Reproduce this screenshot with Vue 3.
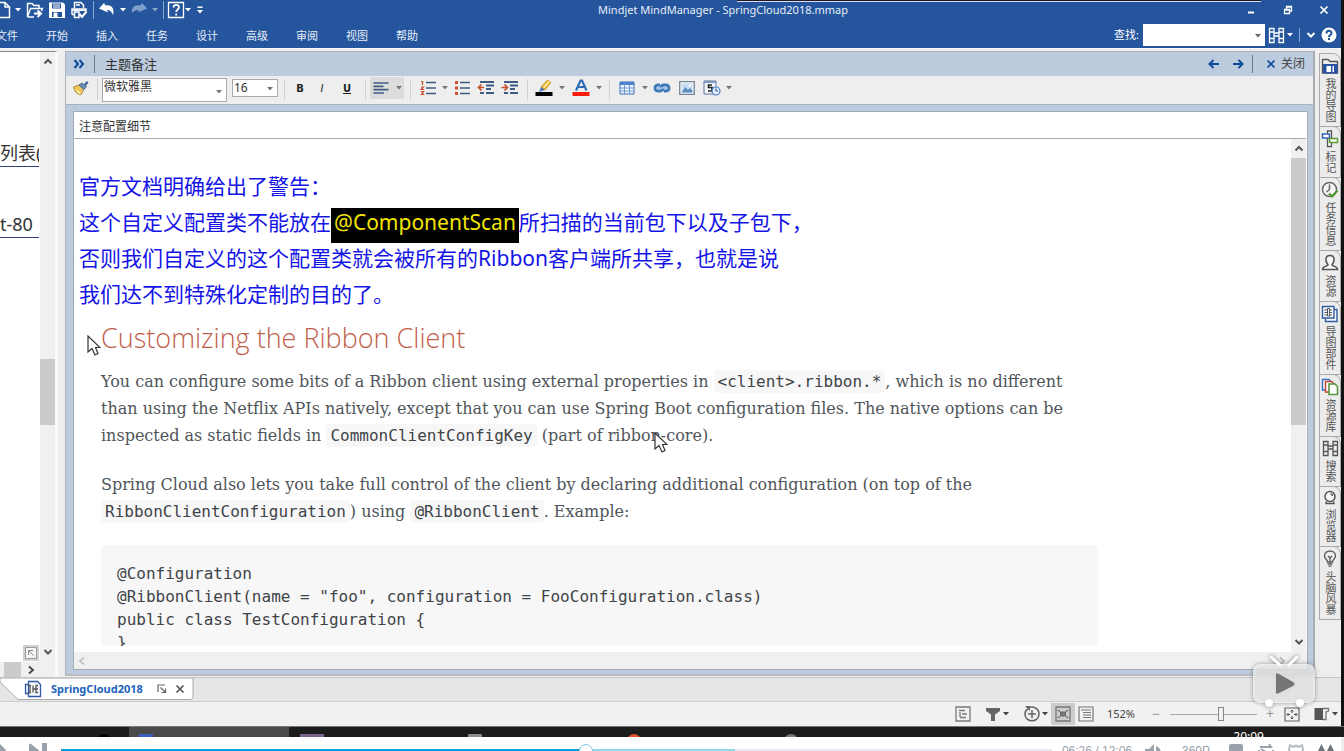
<script setup>
import { h, ref } from 'vue'

const glyphs = {
  newdoc: [12, 18, '<path d="M-4 1.500H5L9.500 6V16.500H-4M5 1.500V6H9.500" fill="none" stroke="#fff" stroke-width="1.500"/>'],
  open: [18, 18, '<path d="M1.500 16V2.500H6L8 4.500H13V7M1.500 16L4.500 7.500H16.500L15.500 10M1.500 16H8" fill="none" stroke="#fff" stroke-width="1.400"/><path d="M8 12.500H14M11.500 9.500L15 12.500L11.500 16" fill="none" stroke="#fff" stroke-width="2"/>'],
  save: [18, 18, '<path d="M1 1.500H15L17 3.500V17H1Z" fill="#fff"/><path d="M4 2.500H13V7.500H4ZM4 11H14V16H4Z" fill="#25569d"/><path d="M5 4H12M5 6H12M6 12H9V16H6Z" stroke="#fff" stroke-width="1" fill="#fff"/>'],
  print: [18, 18, '<path d="M4.500 7V1.500H11L13.500 4V7M2 13.500V8H16V11M4.500 11H9V16.500H4.500ZM2 13.500H4M6 4H10" fill="none" stroke="#fff" stroke-width="1.500"/><path d="M3 8.500H15V10H3Z" fill="#fff"/><path d="M9.500 13L12 16L16.500 10.500" fill="none" stroke="#fff" stroke-width="2"/>'],
  undo: [18, 18, '<path d="M1 7.500L6 2L7.500 4.500C13 3 17 7 15 14C13.500 10 11 8.500 9 9L10 11.500Z" fill="#fff"/>'],
  redo: [18, 18, '<path d="M17 7.500L12 2L10.500 4.500C5 3 1 7 2 12C4 9.500 7 8.500 9 9L8 11.500Z" fill="#7f9fcc"/>'],
  ask: [18, 18, '<path d="M1.500 1.500H16.500V16.500H1.500Z" fill="none" stroke="#fff" stroke-width="1.300"/><path d="M6.500 6.500C6.500 3 12 3 12 6.300C12 8.500 9.200 8.500 9.200 11M9.200 12.500V14.500" fill="none" stroke="#fff" stroke-width="1.800"/>'],
  caret: [6, 4, '<path d="M0 0H6L3 3.500Z" fill="currentColor"/>'],
  more: [6, 8, '<path d="M0.500 0.500H5.500V2H0.500ZM0 4H6L3 7.500Z" fill="currentColor"/>'],
  min: [10, 10, '<path d="M2 7.500H8" stroke="#fff" stroke-width="2"/>'],
  restore: [10, 10, '<path d="M1.500 4.500H6.500V8.500H1.500ZM3.500 4V1.500H8.500V6H7M3.500 2H8.500M1.500 5H6.500" fill="none" stroke="#fff" stroke-width="1.300"/>'],
  close: [10, 10, '<path d="M1.500 1.500L8.500 8.500M8.500 1.500L1.500 8.500" stroke="currentColor" stroke-width="1.700"/>'],
  binoc: [17, 17, '<path d="M1.500 15.500V1.500H6V15.500H1.500ZM15.500 15.500V1.500H11V15.500H15.500ZM6 6H11M6 9H11M1.500 5H6M11 5H15.500M1.500 11.500H6M11 11.500H15.500" fill="none" stroke="currentColor" stroke-width="1.300"/>'],
  down: [10, 10, '<path d="M1.500 3L5 6.500L8.500 3" fill="none" stroke="currentColor" stroke-width="2"/>'],
  up: [10, 10, '<path d="M1.500 6.500L5 3L8.500 6.500" fill="none" stroke="currentColor" stroke-width="2"/>'],
  left: [10, 10, '<path d="M7 1.500L3 5L7 8.500" fill="none" stroke="currentColor" stroke-width="1.600"/>'],
  right: [10, 10, '<path d="M3 1.500L7 5L3 8.500" fill="none" stroke="currentColor" stroke-width="1.800"/>'],
  help: [16, 16, '<circle cx="8" cy="8" r="7.500" fill="#fff"/><path d="M5.500 6.500C5.500 3 10.500 3 10.500 6.200C10.500 8 8 8 8 10M8 11V13" fill="none" stroke="#25569d" stroke-width="2"/>'],
  chevrons: [12, 10, '<path d="M1.500 1L5 5L1.500 9M6.500 1L10 5L6.500 9" fill="none" stroke="#0b4a9c" stroke-width="2"/>'],
  back: [12, 10, '<path d="M11 5H2M5.500 1L1.500 5L5.500 9" fill="none" stroke="#0b4a9c" stroke-width="2"/>'],
  forward: [12, 10, '<path d="M1 5H10M6.500 1L10.500 5L6.500 9" fill="none" stroke="#0b4a9c" stroke-width="2"/>'],
  brush: [18, 16, '<path d="M1.500 7L7 5L12 9.500L8.500 15C5 14 2 11 1.500 7Z" fill="#eec65c" stroke="#b08b3c"/><path d="M3 9L9 12.500L7.500 14.500Z" fill="#fff0a8"/><path d="M7 5L10 3L14.500 6.500L12 9.500Z" fill="#6d8fb8" stroke="#4a6a92"/><path d="M12 4L15 1L16.500 2.200L14 6Z" fill="#3f679b"/>'],
  align: [16, 14, '<path d="M0.500 2H15.500M0.500 5.300H10.500M0.500 8.600H15.500M0.500 12H11" stroke="#3c5c84" stroke-width="1.700"/>'],
  ol: [16, 16, '<path d="M6 2.500H16M6 8H16M6 13.500H16" stroke="#3c5c84" stroke-width="1.700"/><path d="M1 1.500H2.500V5M1 7H3.500L1 9.500H4M1 11.500H3.500L2 13L3.500 14.500H0.500" fill="none" stroke="#c9502c" stroke-width="1.200"/>'],
  ul: [16, 16, '<path d="M6 2.500H16M6 8H16M6 13.500H16" stroke="#3c5c84" stroke-width="1.700"/><path d="M1 1H4V4H1ZM1 6.500H4V9.500H1ZM1 12H4V15H1Z" fill="#c9502c"/>'],
  outdent: [18, 16, '<path d="M3 2H17M9 5.500H17M9 9H14M3 13H7M9 13H17" stroke="#3c5c84" stroke-width="2"/><path d="M7 7.500H2M4.500 4.500L1.500 7.500L4.500 10.500" fill="none" stroke="#c9502c" stroke-width="1.700"/>'],
  indent: [18, 16, '<path d="M3 2H17M9 5.500H17M9 9H14M3 13H7M9 13H17" stroke="#3c5c84" stroke-width="2"/><path d="M0.500 7.500H5.500M3.500 4.500L6.500 7.500L3.500 10.500" fill="none" stroke="#c9502c" stroke-width="1.700"/>'],
  marker: [18, 18, '<path d="M0.500 13H17.500V17H0.500Z" fill="#000"/><path d="M6 8L12.500 1L16 3.500L10 11Z" fill="#f3b936" stroke="#c98a1c" stroke-width=".8"/><path d="M8 8L13.500 2L15 3L9.500 9Z" fill="#ffe9a0"/><path d="M6 8L10 11L4 13Z" fill="#4f7dba"/>'],
  color: [18, 18, '<path d="M0.500 13H17.500V17H0.500Z" fill="#f51a0c"/><path d="M4 11.500L8.500 1.500H10L14.500 11.500M6 8H12" fill="none" stroke="#2f6eb5" stroke-width="2.200"/>'],
  grid: [16, 14, '<path d="M1 1H15V13H1Z" fill="#eef5ff" stroke="#3b6fb5"/><path d="M1 1H15V4H1Z" fill="#4c83cc"/><path d="M1 7H15M1 10H15M5.500 3V13M10.500 3V13" stroke="#6e9ad4"/>'],
  link: [18, 12, '<path d="M7 3H5C1 3 1 9 5 9H7C9 9 10 8 10 6M11 9H13C17 9 17 3 13 3H11C9 3 8 4 8 6" fill="none" stroke="#3d78bb" stroke-width="2.800"/><path d="M4 6H14" stroke="#91bce9" stroke-width="1.500"/>'],
  picture: [16, 14, '<path d="M0.700 0.700H15.300V13.300H0.700Z" fill="#f4f8fd" stroke="#7a8797" stroke-width="1.300"/><path d="M2.500 2.500H13.500V11.500H2.500Z" fill="#c7dcf2"/><path d="M2.500 11.500L6.500 6L9 9L11 7L13.500 10V11.500Z" fill="#5c8bc2"/><circle cx="11" cy="4.500" r="1.200" fill="#fff"/>'],
  date: [18, 16, '<path d="M1 1H13V14H1Z" fill="#f4f7fb" stroke="#5a779e"/><path d="M1 1H13V3H1Z" fill="#7998c2"/><path d="M9 5H5.500V7.500H9V11H5" fill="none" stroke="#222" stroke-width="1.700"/><circle cx="13" cy="11" r="4" fill="#e4f0ff" stroke="#4a7fc2" stroke-width="1.200"/><path d="M13 8.500V11H15" stroke="#23538d" fill="none"/>'],
  folder: [18, 18, '<path d="M1.500 16V2.500H7L9 4.500H16.500V16Z" fill="#eee" stroke="#555" stroke-width="1.400"/><path d="M2 7H16.500V16.500H2Z" fill="#2c52a5"/><path d="M5.500 9H10V15H5.500ZM11.500 9H13V15H11.500Z" fill="#fff"/>'],
  tags: [18, 18, '<path d="M6.500 1H10.500V16.500H6.500Z" fill="#fff" stroke="#555" stroke-width="1.300"/><path d="M1.500 4H8.500V8H1.500Z" fill="#fff" stroke="#2f62b5" stroke-width="1.500"/><path d="M8.500 8.500H16.500V12.500H8.500Z" fill="#fff" stroke="#5a9b35" stroke-width="1.500"/>'],
  clock: [18, 18, '<circle cx="8.500" cy="8.500" r="7" fill="#f6f6f6" stroke="#666" stroke-width="1.500"/><path d="M8.500 3.500V8.500L5.500 11" fill="none" stroke="#666" stroke-width="1.500"/><path d="M8 12.500L11 15.500L16.500 9.500" fill="none" stroke="#4c982b" stroke-width="2.200"/>'],
  person: [18, 18, '<path d="M1.500 15.500H16.500C16.500 12 12 12.500 11 11C14.500 6 13.500 1.500 9 1.500S3.500 6 7 11C6 12.500 1.500 12 1.500 15.500Z" fill="#f7f7f7" stroke="#555" stroke-width="1.500"/>'],
  parts: [18, 18, '<path d="M1.500 1.500H13V13H1.500ZM13 4.500H16V16.500H4.500V13" fill="#f4f8ff" stroke="#315b9d" stroke-width="1.400"/><path d="M3.500 5H6M3.500 7.500H6M3.500 10H6M9 5H11M9 7.500H11M9 10H11M6.500 3.500H8.500V11H6.500Z" fill="none" stroke="#555"/>'],
  library: [18, 18, '<path d="M1.500 1.500H8L10 4V12H1.500Z" fill="#fff" stroke="#3b6fc4" stroke-width="1.500"/><path d="M4.500 3.500H10.500L13 6V14H4.500Z" fill="#fff" stroke="#c74332" stroke-width="1.500"/><path d="M8 6H14L16.500 8.500V16.500H8Z" fill="#fff" stroke="#559440" stroke-width="1.600"/>'],
  globe: [16, 16, '<circle cx="8" cy="6.500" r="5" fill="#f7f7f7" stroke="#555" stroke-width="1.500"/><path d="M4.500 11.500L4 13.500H12L11.500 11.500M8.500 4C10 4 10.500 5 10.500 6" fill="none" stroke="#555" stroke-width="1.400"/>'],
  bulb: [16, 18, '<path d="M5.500 12C5.500 9.500 2.500 9 2.500 6C2.500 -0.500 13.500 -0.500 13.500 6C13.500 9 10.500 9.500 10.500 12ZM5.500 14H10.500M6.500 16.200H9.500M6 6L8 8L10 6M8 8V12" fill="none" stroke="#555" stroke-width="1.300"/>'],
  mapfile: [18, 18, '<path d="M4.500 4V1.500H13.500L16.500 4.500V16.500H4.500V14M1.500 4.500H4.500V13.500H1.500Z" fill="#f5f8ff" stroke="#3458a4" stroke-width="1.300"/><path d="M4 5.500H7M4 12.500H7M6 5.500V12.500M9 5.500V12.500M9 9H14M14 5.500H12V12.500H14" fill="none" stroke="#555" stroke-width="1.300"/>'],
  popout: [10, 10, '<path d="M1 8V1H8M3.500 3.500L8 8M8.500 4.500V8.500H4.500" fill="none" stroke="#666" stroke-width="1.200"/>'],
  outline: [16, 16, '<path d="M1 1H15V15H1ZM4 4.500H10M7 8H12M5 11.500H11M5 6V11" fill="none" stroke="#777" stroke-width="1.300"/>'],
  filter: [16, 16, '<path d="M1 2H15V5L10 8.500V15H6V8.500L1 5Z" fill="#666"/>'],
  addcircle: [18, 18, '<path d="M5 3C9 0.500 16 3 16 9C16 18 2 18 2 9C2 7 3 5 5 4M9 5V13M5 9H13" fill="none" stroke="#666" stroke-width="1.600"/><path d="M2 1H7V6Z" fill="#666"/>'],
  mapview: [16, 16, '<path d="M1 1H15V15H1Z" fill="none" stroke="#777" stroke-width="1.300"/><path d="M5.500 6H10.500V10H5.500ZM3 4L6 7M13 4L10 7M3 12L6 9M13 12L10 9M2.500 4.500H4.500M11.500 4.500H13.500M2.500 11.500H4.500M11.500 11.500H13.500" fill="#777" stroke="#666"/>'],
  listview: [16, 16, '<path d="M1 1H15V15H1ZM3 4H13M5 6.500H13M5 9H13M5 11.500H13" fill="none" stroke="#777" stroke-width="1.200"/>'],
  fit: [16, 16, '<path d="M1 2H15V15H1Z" fill="none" stroke="#666" stroke-width="1.200"/><path d="M8 4V7M8 10V13M3 8.500H6M10 8.500H13M6.500 5.500L8 4L9.500 5.500M6.500 11.500L8 13L9.500 11.500M4.500 7L3 8.500L4.500 10M11.500 7L13 8.500L11.500 10" fill="none" stroke="#555"/>'],
  panel: [16, 14, '<path d="M0.500 1H9V13H0.500Z" fill="#555"/><path d="M9 1.500H14.500V4L12 5V12.500H9" fill="none" stroke="#777" stroke-width="1.300"/>'],
  corner: [16, 16, '<path d="M0 0H16V16H0Z" fill="#d0d0d0"/><path d="M2.500 2.500H13.500V13.500H2.500Z" fill="#f5f5f5" stroke="#999"/><path d="M5.500 10V5.500H10M6 6L10.500 10.500" fill="none" stroke="#888"/>'],
  pointer: [14, 22, '<path d="M1 1V17L5 13.500L8 20L11 18.500L8.500 12.500H13Z" fill="#fff" stroke="#333" stroke-width="1.200"/>'],
  tv: [68, 56, '<path d="M21 3L30 11M47 3L39 11" stroke="#fff" stroke-width="3" stroke-linecap="round"/><circle cx="19" cy="49" r="4" fill="#fff"/><circle cx="50" cy="49" r="4" fill="#fff"/><rect x="3" y="10" width="62" height="39" rx="7" fill="#fff" fill-opacity=".72"/><path d="M26 21C26 19 27 19 29 20L43 28C45 29 45 31 43 32L29 39C27 40 26 40 26 38Z" fill="#757575"/>'],
  play: [6, 16, '<path d="M0 1L6 7L0 13Z" fill="#99a2aa"/>'],
  next: [18, 16, '<path d="M0 1Q0 0 2 1L12 9L0 17ZM13 0H18V16H13Z" fill="#99a2aa"/>'],
  sound: [18, 16, '<path d="M1 6H5L10 1V16H1ZM12 3C18 5 18 11 12 13" fill="#99a2aa"/>'],
  danmu: [16, 16, '<rect x="1" y="1" width="14" height="14" rx="2" fill="#99a2aa"/>'],
  repeat: [18, 16, '<path d="M3 4H14L12 1M16 7V13M2 7V12M4 6L15 13" fill="none" stroke="#99a2aa" stroke-width="2"/>'],
  gear: [18, 16, '<path d="M3 2L6 4L9 2.500L12 4L15 2L16 6L15 10H3L2 6Z" fill="none" stroke="#b4bcc4" stroke-width="2"/>'],
  full: [18, 16, '<path d="M1 15V8L4.500 1L8 8V15ZM10 15V8L13.500 1L17 8V15Z" fill="#6d757a"/>']
}

const Icon = ({ name }) => {
  const [w, ht, body] = glyphs[name]
  return h('svg', { width: w, height: ht, viewBox: `0 0 ${w} ${ht}`, 'aria-hidden': 'true', innerHTML: body })
}
Icon.props = ['name']

const menus = ['文件', '开始', '插入', '任务', '设计', '高级', '审阅', '视图', '帮助']
const quick = [
  ['newdoc', 'w12'], ['caret', 'w12'], ['open', 'w22'], ['save', 'w22'], ['print', 'w22'], ['|', 'w6'],
  ['undo', 'w22'], ['caret', 'w10'], ['redo', 'w22'], ['caret', 'w10', 'faded'], ['|', 'w6'], ['ask', 'w20'], ['caret', 'w4'], ['more', 'w20']
]
const format = [
  ['ol', 'w24'], ['caret', 'w10'], ['ul', 'w24'], ['outdent', 'w24'], ['indent', 'w24'], ['|', 'w10'],
  ['marker', 'w24'], ['caret', 'w12'], ['color', 'w26'], ['caret', 'w10'], ['|', 'w10'],
  ['grid', 'w26'], ['caret', 'w10'], ['link', 'w24'], ['picture', 'w26'], ['date', 'w24'], ['caret', 'w10']
]
const side = [
  ['folder', '我的导图'], ['tags', '标记'], ['clock', '任务信息'], ['person', '资源'], ['parts', '导图部件'],
  ['library', '资源库'], ['binoc', '搜索'], ['globe', '浏览器'], ['bulb', '头脑风暴']
]
const zoom = ref(59)
const query = ref('')
const code = `@Configuration
@RibbonClient(name = "foo", configuration = FooConfiguration.class)
public class TestConfiguration {
}`
</script>

<template>
  <div class="page">
    <div class="video">
      <div class="app">
        <header class="top">
          <div class="titlebar">
            <div class="quick">
              <template v-for="(q, i) in quick" :key="i">
                <span v-if="q[0] === '|'" class="bar" :class="q[1]"></span>
                <button v-else :class="[q[1], q[2]]" :aria-label="q[0]"><Icon :name="q[0]" /></button>
              </template>
            </div>
            <div class="title">Mindjet MindManager - SpringCloud2018.mmap</div>
            <div class="window">
              <button aria-label="minimize"><Icon name="min" /></button>
              <button aria-label="restore"><Icon name="restore" /></button>
              <button aria-label="close"><Icon name="close" /></button>
            </div>
          </div>
          <div class="ribbon">
            <nav>
              <button v-for="m in menus" :key="m">{{ m }}</button>
            </nav>
            <label for="find">查找:</label>
            <div class="find">
              <input id="find" v-model="query" type="text" />
              <Icon name="caret" />
            </div>
            <button class="w22" aria-label="find"><Icon name="binoc" /></button>
            <button class="w6" aria-label="find options"><Icon name="caret" /></button>
            <span class="bar w12"></span>
            <button class="w12" aria-label="collapse"><Icon name="down" /></button>
            <button class="w24" aria-label="help"><Icon name="help" /></button>
          </div>
        </header>
        <div class="notch"></div>

        <main class="main">
          <section class="map">
            <div class="canvas">
              <div class="topic first">列表(</div>
              <div class="topic second">t-80</div>
              <button class="corner" aria-label="overview"><Icon name="corner" /></button>
            </div>
            <div class="vscroll">
              <Icon name="up" />
              <span class="thumb"></span>
              <Icon name="down" />
            </div>
            <div class="hscroll"><span></span><Icon name="right" /></div>
          </section>

          <section class="notes">
            <div class="noteshead">
              <button class="w26" aria-label="collapse notes"><Icon name="chevrons" /></button>
              <span class="rule"></span>
              <h1>主题备注</h1>
              <button class="w24" aria-label="previous"><Icon name="back" /></button>
              <button class="w24" aria-label="next"><Icon name="forward" /></button>
              <span class="rule"></span>
              <button class="closer"><Icon name="close" /><span>关闭</span></button>
            </div>
            <div class="tools">
              <button class="w22" aria-label="format painter"><Icon name="brush" /></button>
              <span class="bar w10"></span>
              <div class="pick font">
                <select aria-label="font"><option>微软雅黑</option></select>
                <Icon name="caret" />
              </div>
              <div class="pick size">
                <select aria-label="size"><option>16</option></select>
                <Icon name="caret" />
              </div>
              <span class="bar w12"></span>
              <button class="w20 letter"><b>B</b></button>
              <button class="w24 letter"><i>I</i></button>
              <button class="w26 letter"><u>U</u></button>
              <span class="bar w10"></span>
              <button class="aligned" aria-label="align"><Icon name="align" /><Icon name="caret" /></button>
              <span class="bar w12"></span>
              <template v-for="(f, i) in format" :key="i">
                <span v-if="f[0] === '|'" class="bar" :class="f[1]"></span>
                <button v-else :class="f[1]" :aria-label="f[0]"><Icon :name="f[0]" /></button>
              </template>
            </div>
            <div class="frame">
              <div class="subject">注意配置细节</div>
              <div class="view">
                <article class="doc">
                  <div class="warn">
                    <p>官方文档明确给出了警告：</p>
                    <p>这个自定义配置类不能放在<mark>@ComponentScan</mark>所扫描的当前包下以及子包下，</p>
                    <p>否则我们自定义的这个配置类就会被所有的Ribbon客户端所共享，也就是说</p>
                    <p>我们达不到特殊化定制的目的了。</p>
                  </div>
                  <div class="guide">
                    <h2>Customizing the Ribbon Client</h2>
                    <p>You can configure some bits of a Ribbon client using external properties in <code>&lt;client&gt;.ribbon.*</code>, which is no different<br />than using the Netflix APIs natively, except that you can use Spring Boot configuration files. The native options can be<br />inspected as static fields in <code>CommonClientConfigKey</code> (part of ribbon-core).</p>
                    <p>Spring Cloud also lets you take full control of the client by declaring additional configuration (on top of the<br /><code>RibbonClientConfiguration</code>) using <code>@RibbonClient</code>. Example:</p>
                    <pre>{{ code }}</pre>
                  </div>
                  <Icon name="pointer" class="cursor one" />
                  <Icon name="pointer" class="cursor two" />
                </article>
                <div class="vscroll wide">
                  <Icon name="up" />
                  <span class="thumb"></span>
                  <Icon name="down" />
                </div>
              </div>
              <div class="hbar"><Icon name="left" /><Icon name="right" /></div>
            </div>
          </section>

          <aside class="side">
            <button v-for="s in side" :key="s[1]"><Icon :name="s[0]" /><span>{{ s[1] }}</span></button>
          </aside>
        </main>

        <div class="files">
          <div class="file">
            <svg class="shape" viewBox="0 0 194 23" width="194" height="23" aria-hidden="true"><path d="M0 0H193V19Q193 21.500 190 21.500H18L0 4Z" fill="#fff" stroke="#aaa" /></svg>
            <Icon name="mapfile" />
            <a href="#">SpringCloud2018</a>
            <button class="w20" aria-label="detach"><Icon name="popout" /></button>
            <button class="w16" aria-label="close file"><Icon name="close" /></button>
          </div>
        </div>

        <footer class="status">
          <button class="w24 outline" aria-label="outline"><Icon name="outline" /></button>
          <button class="w20" aria-label="filter"><Icon name="filter" /></button>
          <button class="w6" aria-label="filter options"><Icon name="caret" /></button>
          <button class="w20 plus" aria-label="detail"><Icon name="addcircle" /></button>
          <button class="w6" aria-label="detail options"><Icon name="caret" /></button>
          <button class="active w24" aria-label="map view"><Icon name="mapview" /></button>
          <button class="w22" aria-label="outline view"><Icon name="listview" /></button>
          <label class="percent" for="zoom">152%</label>
          <button class="w26 sign" aria-label="zoom out">−</button>
          <input id="zoom" v-model="zoom" type="range" min="0" max="100" />
          <button class="w24 sign" aria-label="zoom in">+</button>
          <button class="w20" aria-label="fit map"><Icon name="fit" /></button>
          <button class="w30 pane" aria-label="task panes"><Icon name="panel" /></button>
          <button class="w6" aria-label="pane options"><Icon name="caret" /></button>
        </footer>
      </div>
      <div class="taskbar">
        <span class="tile"></span>
        <i class="dot d1"></i><i class="dot d2"></i><i class="dot d3"></i><i class="dot d4"></i><i class="dot d5"></i><i class="dot d6"></i>
        <time>20:09</time>
      </div>
      <Icon name="tv" class="tv" />
    </div>

    <div class="player">
      <button class="go" aria-label="play"><Icon name="play" /></button>
      <button class="skip" aria-label="next video"><Icon name="next" /></button>
      <div class="track"><span class="loaded"></span><span class="played"></span><span class="knob"></span></div>
      <span class="time">06:26 / 12:06</span>
      <button class="w36" aria-label="volume"><Icon name="sound" /></button>
      <button class="quality">360P</button>
      <button class="w30" aria-label="comments"><Icon name="danmu" /></button>
      <button class="w30" aria-label="repeat"><Icon name="repeat" /></button>
      <button class="w30" aria-label="settings"><Icon name="gear" /></button>
      <button class="w30" aria-label="full screen"><Icon name="full" /></button>
    </div>
  </div>
</template>

<style>
body { overflow: hidden; }
</style>

<style scoped>
* { box-sizing: border-box; }
.page { height: 100vh; display: flex; flex-direction: column; overflow: hidden; background: #fff; color: #333; font: 12px/16px "Noto Sans", "Noto Sans CJK SC", sans-serif; }
button { border: 0; padding: 0; margin: 0; background: none; color: inherit; font: inherit; display: flex; align-items: center; justify-content: center; flex: none; }
svg { display: block; flex: none; }
p, h1, h2, pre { margin: 0; font-weight: 400; }
.w4 { width: 4px; } .w6 { width: 6px; } .w10 { width: 10px; } .w12 { width: 12px; } .w16 { width: 16px; }
.w20 { width: 20px; } .w22 { width: 22px; } .w24 { width: 24px; } .w26 { width: 26px; } .w30 { width: 30px; } .w36 { width: 36px; }
.bar { flex: none; align-self: stretch; display: flex; justify-content: center; }
.bar::before { content: ""; width: 1px; background: currentColor; }

.video { flex: 1; min-height: 0; display: flex; flex-direction: column; position: relative; background: #111; }
.app { flex: 1; min-height: 0; margin-right: 3px; display: flex; flex-direction: column; background: #eee; }

.top { background: #25569d; color: #fff; height: 48px; flex: none; margin-right: -3px; border-right: 3px solid #111; }
.titlebar { height: 20px; display: flex; align-items: center; }
.quick { width: 208px; height: 18px; display: flex; align-items: center; }
.quick .bar { color: #89a6d0; }
.faded { color: #89a6d0; }
.title { flex: 1; text-align: center; color: #e6edf8; font-size: 11px; padding-left: 4px; }
.window { width: 107px; display: flex; justify-content: space-between; padding: 0 12px; }
.ribbon { height: 28px; display: flex; align-items: center; padding-top: 2px; }
.ribbon nav { display: flex; flex: 1; margin-left: -18px; }
.ribbon nav button { width: 50px; font-size: 11px; height: 24px; padding-top: 2px; color: #e6edf8; }
.ribbon label { font-size: 11px; margin-right: 4px; }
.find { width: 122px; height: 22px; position: relative; color: #666; }
.find input { width: 100%; height: 100%; border: 0; padding: 0 16px 0 4px; background: #fff; display: block; }
.find svg { position: absolute; right: 4px; top: 10px; }
.ribbon .bar { color: #89a6d0; padding: 6px 0; }
.notch { position: absolute; top: 0; right: 83px; width: 39%; height: 2px; background: #1b1b2b; border-bottom: 1px solid #dde; }

.main { flex: 1; min-height: 0; display: flex; padding-top: 2px; border-top: 1px solid #f7f7f7; }
.map { width: 58px; border-top: 1px solid #888; display: grid; grid-template: 1fr 15px / 40px 15px; background: #f0f0f0; flex: none; border-right: 3px solid #fafafa; }
.canvas { background: #fff; position: relative; overflow: hidden; font-size: 18px; }
.topic { white-space: nowrap; line-height: 26px; height: 27px; border-bottom: 1px solid #33417a; width: 39px; overflow: hidden; }
.first { margin-top: 88px; }
.second { margin-top: 44px; }
.corner { position: absolute; right: 1px; bottom: 1px; }
.vscroll { display: flex; flex-direction: column; align-items: center; background: #f0f0f0; color: #555; padding: 5px 0; }
.vscroll .thumb { width: 100%; background: #cbcbcb; height: 66px; margin: 292px 0 auto; }
.hscroll { grid-column: 1 / 3; display: flex; align-items: center; color: #444; }
.hscroll span { width: 17px; height: 15px; background: #cbcbcb; margin: 0 5px 0 4px; }

.notes { flex: 1; min-width: 0; margin-left: 7px; background: #bccbdd; border: 1px solid #aab2bd; border-right: 2px solid #a9adb3; border-bottom: 2px solid #b9bcc0; display: flex; flex-direction: column; margin-bottom: 1px; }
.noteshead { height: 24px; flex: none; display: flex; align-items: center; color: #333; padding-right: 8px; }
.noteshead h1 { flex: 1; font-size: 13px; line-height: 20px; padding-left: 8px; }
.rule { width: 1px; height: 18px; background: #6e7987; margin: 0 2px; }
.closer { color: #444; margin-left: 11px; gap: 5px; }
.closer svg { color: #0b4a9c; }
.tools { height: 29px; flex: none; background: #eee; display: flex; align-items: center; padding: 0 0 4px 4px; border-bottom: 1px solid #aab2bd; color: #777; }
.tools .bar { color: #d2d2d2; padding-top: 3px; }
.pick { position: relative; flex: none; align-self: flex-start; }
.pick select { appearance: none; width: 100%; height: 100%; display: block; border: 1px solid #aaa; border-radius: 0; background: #fff; color: #333; font: 12px/16px "Noto Sans", "Noto Sans CJK SC", sans-serif; padding: 0 14px 0 1px; }
.pick svg { position: absolute; right: 5px; top: 50%; }
.font { width: 125px; height: 24px; margin: 2px 5px 0 0; }
.font select { padding-bottom: 6px; }
.size { width: 46px; height: 18px; margin-top: 3px; }
.size svg { top: 8px; }
.letter { color: #222; font: 10px/14px "DejaVu Sans", sans-serif; padding-top: 2px; }
.letter u { font-weight: 700; }
.aligned { width: 34px; height: 22px; background: #dcdcdc; gap: 7px; }

.frame { flex: 1; min-height: 0; margin: 6px 5px 4px 7px; border: 1px solid #a4abb6; background: #fff; display: flex; flex-direction: column; }
.subject { height: 27px; flex: none; line-height: 30px; padding-left: 5px; margin-right: 1px; border-bottom: 1px solid #aaa; }
.view { flex: 1; min-height: 0; display: flex; padding-right: 1px; }
.doc { flex: 1; min-width: 0; position: relative; overflow: hidden; padding: 29px 0 0 5px; margin-bottom: 6px; }
.wide { width: 15px; }
.wide .thumb { height: 267px; margin-top: 4px; }
.warn { color: #1414e6; font-size: 21px; line-height: 36px; white-space: nowrap; margin-bottom: 1px; }
.warn p { height: 36px; }
mark { background: #000; color: #f2e500; padding: 0 3px 7px; }
.guide { padding-left: 22px; margin-right: 193px; color: #50555a; font: 16px/27px "DejaVu Serif", serif; white-space: nowrap; }
.guide h2 { font: 300 27px/50px "Open Sans", sans-serif; color: #c0604c; margin-bottom: 5px; }
.guide p { margin-bottom: 22px; }
.guide p + p { margin-bottom: 20px; }
code, pre { font: 16px/23px "DejaVu Sans Mono", monospace; color: #3f4448; }
code { background: #f7f7f8; border-radius: 4px; padding: 2px 4px; }
pre { background: #f7f7f8; padding: 17px 16px 30px; border-radius: 4px; }
.cursor { position: absolute; }
.one { left: 13px; top: 196px; }
.two { left: 580px; top: 293px; }
.hbar { height: 17px; flex: none; background: #f0f0f0; display: flex; align-items: center; justify-content: space-between; padding: 0 20px 0 3px; color: #bbb; }

.side { width: 22px; margin: 2px 0 0 4px; flex: none; display: flex; flex-direction: column; }
.side button { flex-direction: column; justify-content: flex-start; gap: 3px; padding: 3px 0 4px; border: 1px solid #aaa; border-top-right-radius: 8px; background: #ececec; color: #555; margin-bottom: -1px; }
.side span { writing-mode: vertical-rl; font-size: 11px; line-height: 14px; }

.files { height: 25px; flex: none; background: #e6e6e6; border-bottom: 1px solid #ccc; border-top: 1px solid #c4c4c4; }
.file { position: relative; width: 194px; height: 22px; display: flex; align-items: center; padding-left: 24px; color: #555; }
.file > * { position: relative; }
.file .shape { position: absolute; left: 0; top: 0; }
.file a { color: #1c62bd; font-weight: 700; font-size: 11px; text-decoration: none; margin: 0 9px; }
.status { height: 24px; flex: none; display: flex; align-items: center; justify-content: flex-end; color: #444; background: #f1f1f1; padding-right: 3px; }
.status .active { background: #ccc; height: 22px; margin-left: 3px; }
.outline { margin-right: 8px; }
.plus { margin-left: 13px; }
.percent { margin: 0 8px 0 10px; font-size: 11px; }
.sign { color: #999; font-size: 14px; }
.status input { width: 87px; height: 16px; margin: 0 1px; appearance: none; background: linear-gradient(#aaa, #aaa) center / 100% 1px no-repeat; }
.status input::-webkit-slider-thumb { appearance: none; width: 6px; height: 14px; background: #f1f1f1; border: 1px solid #888; }
.pane { padding-left: 10px; }

.taskbar { height: 11px; flex: none; position: relative; background: #1b1c1b; overflow: hidden; border-top: 1px solid #777; }
.tile { position: absolute; left: 129px; width: 160px; top: 0; bottom: 0; background: #4a4a4a; }
.dot { position: absolute; top: 7px; width: 14px; height: 14px; border-radius: 7px; }
.d1 { left: 97px; background: #000; }
.d2 { left: 139px; background: #3a5fc0; border-radius: 1px; }
.d3 { left: 300px; width: 24px; background: #7b6390; border-radius: 1px; }
.d4 { left: 468px; background: #8a8a8a; border-radius: 1px; }
.d5 { left: 627px; background: #e0512e; }
.d6 { left: 784px; background: #777; }
.taskbar time { position: absolute; right: 80px; top: 2px; color: #fff; font-size: 12px; line-height: 16px; }
.tv { position: absolute; right: 26px; bottom: 27px; filter: drop-shadow(0 0 2px rgba(0, 0, 0, .5)); }

.player { height: 14px; flex: none; display: flex; align-items: flex-start; background: #fff; overflow: hidden; padding-top: 6px; color: #99a2aa; border-right: 3px solid #eee; }
.skip { margin: 0 14px 0 23px; }
.track { flex: 1; height: 3px; margin-top: 6px; background: #e5e9ef; position: relative; }
.loaded, .played { position: absolute; left: 0; top: 0; bottom: 0; }
.loaded { width: 68%; background: #8adced; }
.played { width: 53%; background: #00a1d6; }
.knob { position: absolute; left: 53%; top: -5px; width: 14px; height: 14px; margin-left: -7px; border: 1px solid #7cc8e6; border-radius: 7px; background: #fff; }
.time { margin: 0 3px 0 10px; font: 12px/16px "Liberation Sans", sans-serif; }
.quality { width: 50px; font: 12px/16px "Liberation Sans", sans-serif; }
</style>
